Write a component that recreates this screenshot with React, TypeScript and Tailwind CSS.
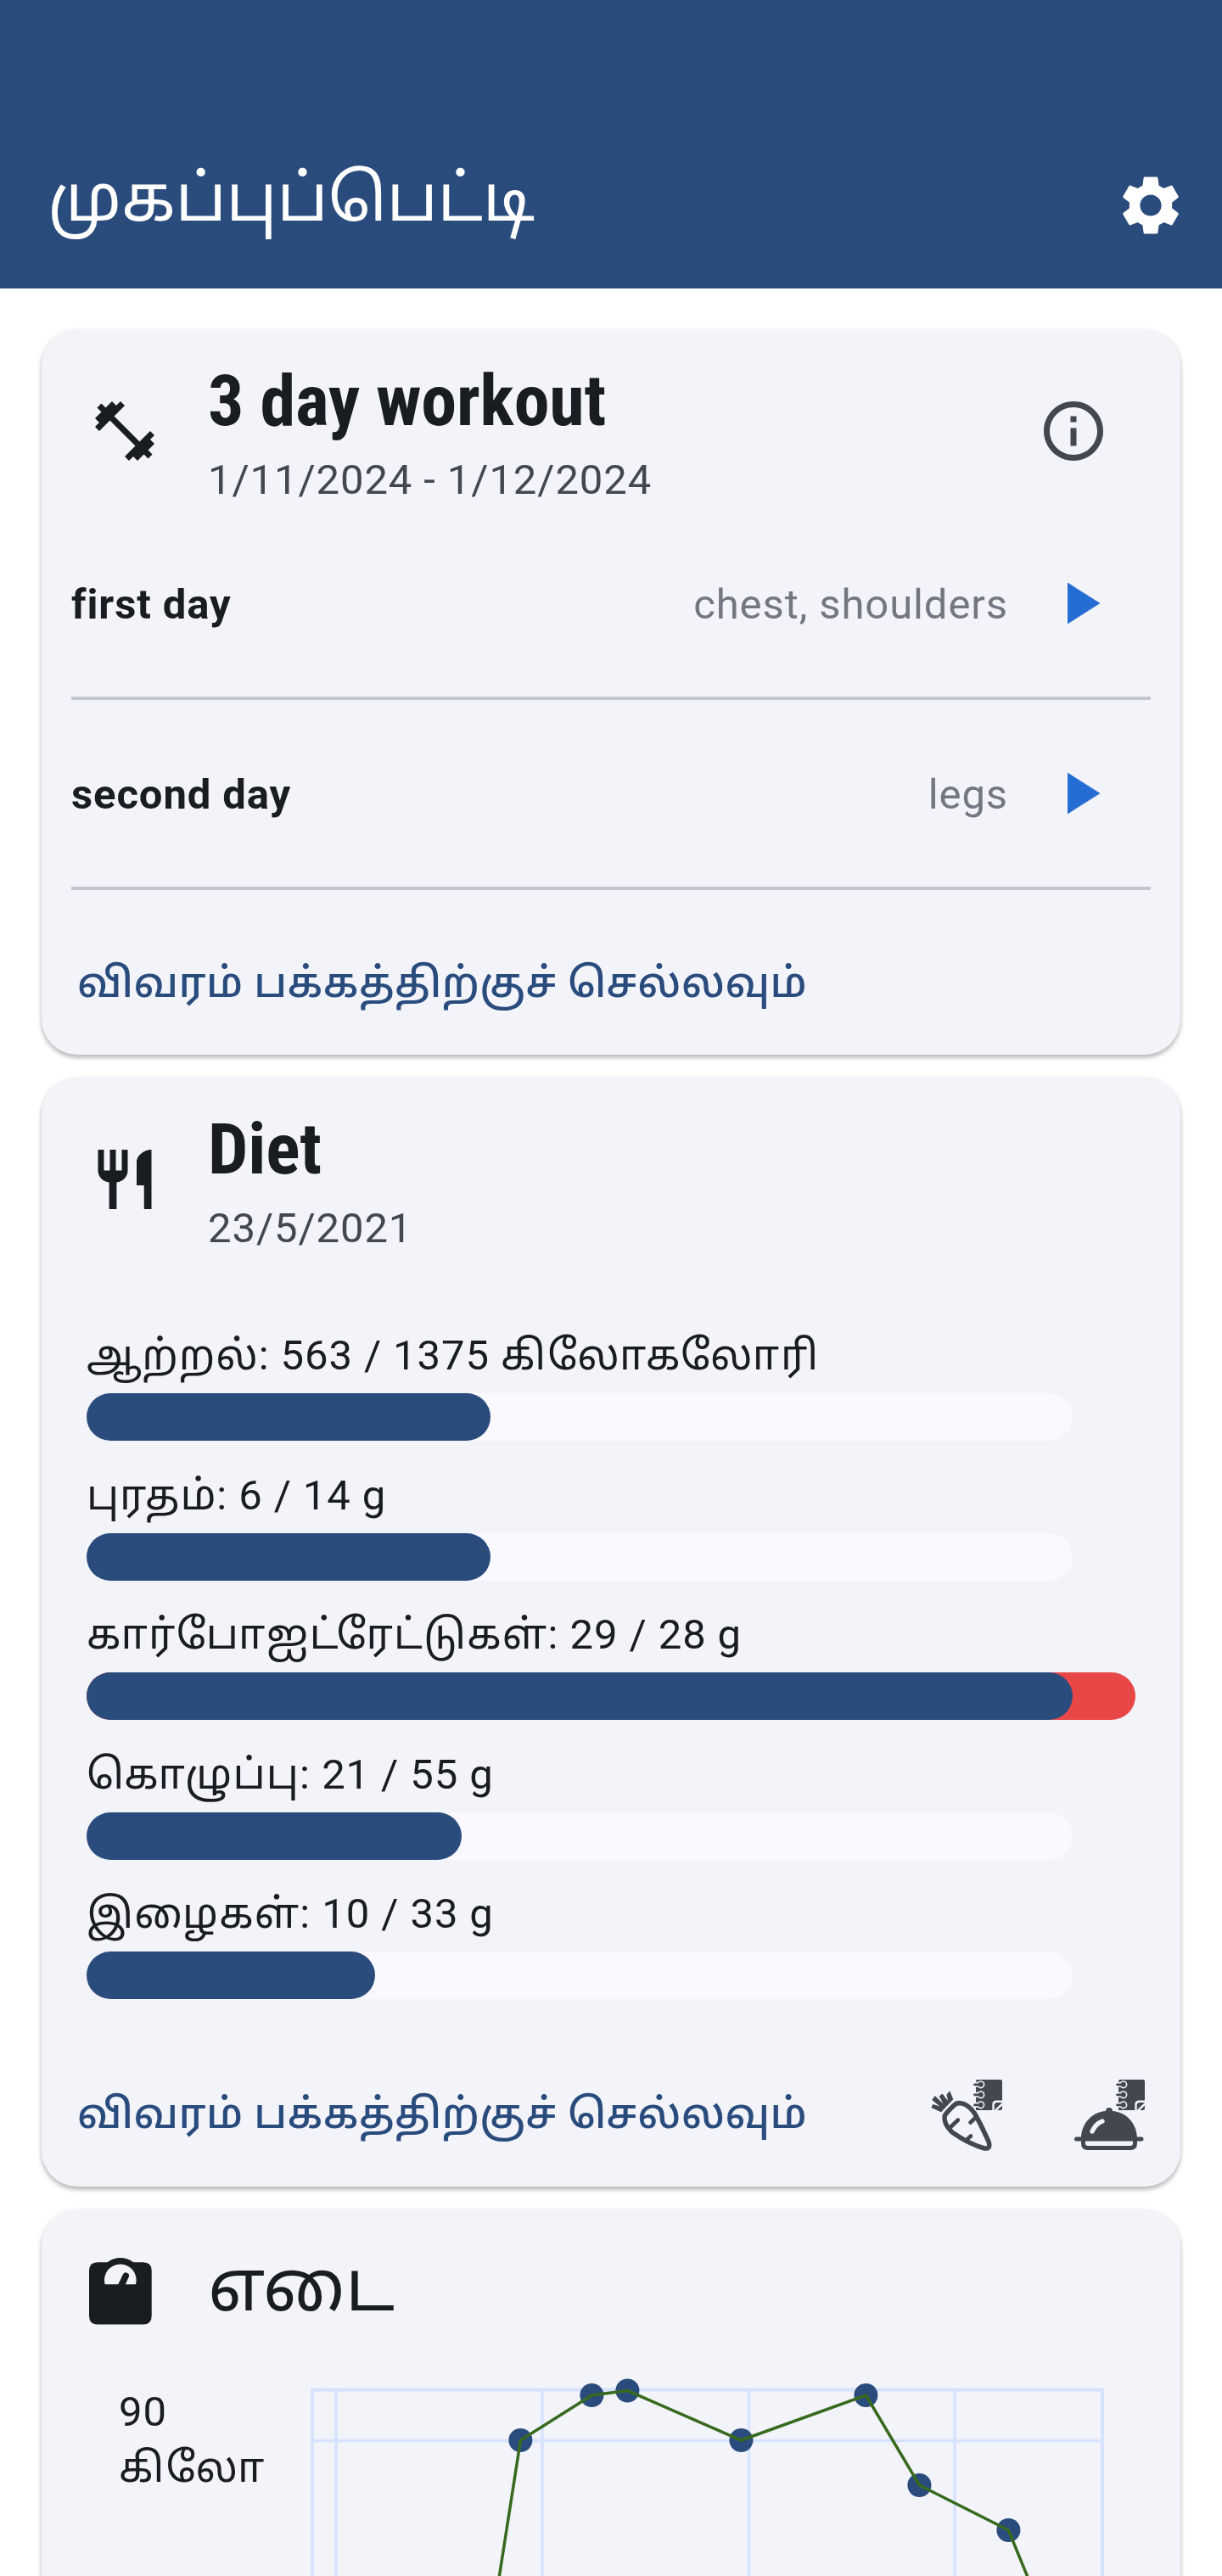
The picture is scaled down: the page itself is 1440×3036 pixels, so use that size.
import { MdFitnessCenter, MdInfoOutline, MdPlayArrow, MdRestaurant, MdSettings } from "react-icons/md";

function Notebook() {
  return (
    <g>
      <path
        d="M53 36 V2 Q53 0 55 0 H82 Q84 0 84 2 V24.5 H76.500 Q72.300 25 72.300 29 V36 Z"
        fill="currentColor"
      />
      <path d="M74.700 36 V29.500 Q75 27 77.500 27 H84 Z" fill="currentColor" />
      <path d="M84 30.500 V34 Q84 36 82 36 H78.300 Z" fill="currentColor" />
      {[5.8, 17.8, 29.8].map((y) => (
        <g key={y}>
          <circle cx="58.8" cy={y} r="4.6" fill="#f3f3fa" />
          <path d={`M52 ${y} H58`} stroke="#f3f3fa" strokeWidth="6" />
          <circle cx="58.8" cy={y} r="3" fill="currentColor" />
          <path d={`M51.5 ${y} H58`} stroke="currentColor" strokeWidth="2.8" strokeLinecap="round" />
        </g>
      ))}
    </g>
  );
}

function CarrotNotebook() {
  return (
    <svg viewBox="0 0 84 84" className="size-[84px] text-[#43474e]">
      <Notebook />
      <path
        d="M33.500 27.500 Q43 28 51 39 Q57 49 68 73 Q71 82 63 81 Q45 76 25 62 Q14 51 16.500 42 Q19 38 26.500 31 Q29.500 27.500 33.500 27.500 Z"
        fill="#f3f3fa"
        stroke="currentColor"
        strokeWidth="5.5"
        strokeLinejoin="round"
      />
      <path
        d="M22 57 L32 47.500 M46.500 50.500 L53 44.500 M43 70 L47 66.500"
        stroke="currentColor"
        strokeWidth="4.6"
        strokeLinecap="round"
      />
      <path
        d="M22.300 13.300 L26.300 23.300 L12 38.300 L0.300 33 L2.300 29 L10.500 31.500 L1.300 24 L4.700 19 L14.500 28.500 L9.700 19.500 L13.500 16.500 L20 25 L18.500 17.500 Z"
        fill="currentColor"
      />
    </svg>
  );
}

function ClocheNotebook() {
  return (
    <svg viewBox="0 0 84 84" className="size-[84px] text-[#43474e]">
      <Notebook />
      <g transform="translate(1 0)">
        <path
          d="M8 68 C9 50 22 38 37 37 A4 4 0 1 1 45 37 C60 38 73 50 74 68 Z"
          fill="currentColor"
          stroke="#f3f3fa"
          strokeWidth="1.5"
          paintOrder="stroke"
        />
        <path d="M21 61 Q25 52 33 49" stroke="#f3f3fa" strokeWidth="5.4" strokeLinecap="round" fill="none" />
        <path d="M2.5 70 H79" stroke="currentColor" strokeWidth="5" strokeLinecap="round" />
        <path d="M10.5 70 V75 Q10.500 80.500 16 80.500 H66 Q71.500 80.500 71.500 75 V70" stroke="currentColor" strokeWidth="5" fill="none" />
      </g>
    </svg>
  );
}

function ScaleIcon() {
  return (
    <svg viewBox="0 0 74 79" className="h-[79px] w-[74px] text-[#191c20]">
      <path
        fill="currentColor"
        fillRule="evenodd"
        d="M10 5.200 H21.500 Q36.800 -5 52.200 5.200 H63.700 Q73.700 5.200 73.700 15.200 V68.500 Q73.700 78.500 63.700 78.500 H10 Q0 78.500 0 68.500 V15.200 Q0 5.200 10 5.200 Z M18.700 31.300 H34.300 L39.800 19.800 A3.700 3.700 0 0 1 46.800 22.500 L42.800 31.300 H54.900 A18.800 18.800 0 1 0 18.700 31.300 Z"
      />
    </svg>
  );
}

type HeadProps = { icon: React.ReactNode; title: string; date: string; action?: React.ReactNode };

function CardHead({ icon, title, date, action }: HeadProps) {
  return (
    <div className="flex items-start pt-[28px] pl-[56px] pr-[84px]">
      <div className="mt-[49px] w-[140px]">{icon}</div>
      <div className="flex-1 whitespace-nowrap">
        <h2 className="h-[112px] text-[84px] leading-[112px] font-bold tracking-[-0.15px] text-[#191c20] [font-stretch:75%]">
          {title}
        </h2>
        <p className="mt-[2px] h-[70px] text-[49px] leading-[70px] tracking-[0.9px] text-[#43474e]">{date}</p>
      </div>
      <div className="mt-[49px]">{action}</div>
    </div>
  );
}

const days = [
  { name: "first day", focus: "chest, shoulders" },
  { name: "second day", focus: "legs" },
];

type Nutrient = { name: string; spacing: string; amount: string; unit?: string; width: number; over?: number };

const nutrients: Nutrient[] = [
  { name: "ஆற்றல்:", spacing: "tracking-[0.9px]", amount: " 563 / 1375 ", unit: "கிலோகலோரி", width: 476 },
  { name: "புரதம்:", spacing: "tracking-[0.9px]", amount: " 6 / 14 g", width: 476 },
  { name: "கார்போஐட்ரேட்டுகள்:", spacing: "tracking-[1.2px]", amount: " 29 / 28 g", width: 1162, over: 1236 },
  { name: "கொழுப்பு:", spacing: "tracking-[1.2px]", amount: " 21 / 55 g", width: 442 },
  { name: "இழைகள்:", spacing: "tracking-[1.1px]", amount: " 10 / 33 g", width: 340 },
];

const points = [
  [564.4, 72],
  [648.4, 19],
  [690.4, 13.5],
  [824.4, 72],
  [971.4, 19],
  [1034.4, 125],
  [1139.4, 178],
];

const CARD =
  "rounded-[42px] bg-[#f3f3fa] shadow-[0_4px_5px_rgba(0,0,0,0.22),0_1px_7px_rgba(0,0,0,0.1)]";
const LINK = "h-[70px] whitespace-nowrap text-[49px] leading-[70px] font-medium tracking-[0.42px] text-[#2a4c7d]";

function WeightChart() {
  return (
    <svg viewBox="0 0 1342 240" className="absolute top-[199px] left-0 h-[240px] w-[1342px] overflow-visible">
      <g stroke="#d6e3ff" fill="none">
        <path d="M347 12 V240 M590 12 V240 M833.500 12 V240 M1076 12 V240 M319 72.500 H1250" strokeWidth="3.500" />
        <path d="M319 240 V12.500 H1250 V240" strokeWidth="4" />
      </g>
      {points.map(([x, y]) => (
        <circle key={x} cx={x} cy={y} r="14" fill="#2a4c7d" />
      ))}
      <polyline
        points={`537.4,245 ${points.map((p) => p.join(",")).join(" ")} 1166.400,244`}
        fill="none"
        stroke="#376a1e"
        strokeWidth="3.500"
      />
    </svg>
  );
}

export default function App() {
  return (
    <div className="h-[3036px] w-[1440px] overflow-hidden bg-white font-[Roboto,'Noto_Sans_Tamil','Noto_Sans',sans-serif]">
      <header className="flex h-[340px] items-end bg-[#2a4c7d] pr-[42px] pb-[56px] pl-[56px] text-white">
        <h1 className="mb-[1px] h-[98px] flex-1 whitespace-nowrap text-[77px] leading-[98px]">முகப்புப்பெட்டி</h1>
        <MdSettings className="size-[84px]" />
      </header>
      <main className="flex flex-col gap-[28px] px-[49px] pt-[49px]">
        <section className={`${CARD} h-[854px] shrink-0`}>
          <CardHead
            icon={<MdFitnessCenter className="size-[84px] text-[#191c20]" />}
            title="3 day workout"
            date="1/11/2024 - 1/12/2024"
            action={<MdInfoOutline className="size-[84px] text-[#43474e]" />}
          />
          <div className="px-[35px]">
            {days.map((d) => (
              <div key={d.name} className="flex h-[224px] items-center border-b-4 border-[#c4c6cf] text-[49px] tracking-[0.9px]">
                <span className="mt-[3px] flex-1 font-bold text-[#191c20]">{d.name}</span>
                <span className="mt-[3px] text-[#74777f]">{d.focus}</span>
                <MdPlayArrow className="mr-[42px] ml-[42px] size-[84px] text-[#266dd3]" />
              </div>
            ))}
          </div>
          <div className={`${LINK} mt-[75px] ml-[42px]`}>விவரம் பக்கத்திற்குச் செல்லவும்</div>
        </section>

        <section className={`${CARD} h-[1306px] shrink-0`}>
          <CardHead
            icon={<MdRestaurant className="size-[84px] text-[#191c20]" />}
            title="Diet"
            date="23/5/2021"
          />
          <div className="mt-[80px] flex flex-col gap-[29.5px] pl-[53px]">
            {nutrients.map((n) => (
              <div key={n.name}>
                <div className="h-[70px] whitespace-pre text-[49px] leading-[70px] tracking-[0.9px] text-[#191c20]">
                  <span className={n.spacing}>{n.name}</span>
                  {n.amount}
                  {n.unit && <span className="tracking-[1.9px]">{n.unit}</span>}
                </div>
                <div className="relative mt-[9px] h-[56px] w-[1162px] rounded-full bg-[#f9f9ff]">
                  {n.over && <div className="absolute inset-y-0 left-0 rounded-full bg-[#e84747]" style={{ width: n.over }} />}
                  <div className="relative h-full rounded-full bg-[#2a4c7d]" style={{ width: n.width }} />
                </div>
              </div>
            ))}
          </div>
          <div className="mt-[95px] flex items-center pr-[42px] pl-[42px]">
            <div className={`${LINK} mb-[2px] flex-1`}>விவரம் பக்கத்திற்குச் செல்லவும்</div>
            <CarrotNotebook />
            <div className="w-[84px]" />
            <ClocheNotebook />
          </div>
        </section>

        <section className={`${CARD} relative h-[900px] shrink-0`}>
          <div className="flex items-center pt-[34px] pl-[56px]">
            <div className="mt-[11px] w-[140px]">
              <ScaleIcon />
            </div>
            <h2 className="h-[112px] text-[84px] leading-[112px] text-[#191c20]">எடை</h2>
          </div>
          <div className="mt-[59px] ml-[91px] w-[200px] text-[49px] leading-[66px] tracking-[0.9px] text-[#191c20]">
            90 <span className="tracking-[1.9px]">கிலோ</span>
          </div>
          <WeightChart />
        </section>
      </main>
    </div>
  );
}
